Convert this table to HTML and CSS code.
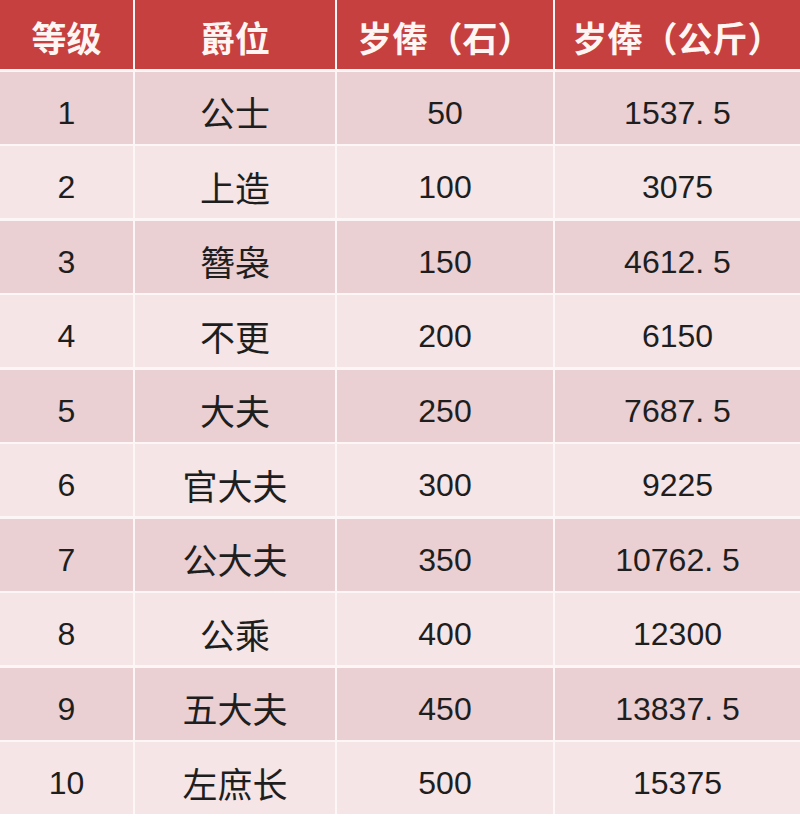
FILE: index.html
```html
<!DOCTYPE html>
<html lang="zh-CN">
<head>
<meta charset="utf-8">
<title>爵位岁俸</title>
<link rel="stylesheet" href="styles.css">
</head>
<body>
<div class="table">
  <div class="row head">
    <div class="cell">等级</div>
    <div class="cell">爵位</div>
    <div class="cell">岁俸（石）</div>
    <div class="cell">岁俸（公斤）</div>
  </div>
  <div class="row odd"><div class="cell">1</div><div class="cell name">公士</div><div class="cell">50</div><div class="cell">1537. 5</div></div>
  <div class="row even"><div class="cell">2</div><div class="cell name">上造</div><div class="cell">100</div><div class="cell">3075</div></div>
  <div class="row odd"><div class="cell">3</div><div class="cell name">簪袅</div><div class="cell">150</div><div class="cell">4612. 5</div></div>
  <div class="row even"><div class="cell">4</div><div class="cell name">不更</div><div class="cell">200</div><div class="cell">6150</div></div>
  <div class="row odd"><div class="cell">5</div><div class="cell name">大夫</div><div class="cell">250</div><div class="cell">7687. 5</div></div>
  <div class="row even"><div class="cell">6</div><div class="cell name">官大夫</div><div class="cell">300</div><div class="cell">9225</div></div>
  <div class="row odd"><div class="cell">7</div><div class="cell name">公大夫</div><div class="cell">350</div><div class="cell">10762. 5</div></div>
  <div class="row even"><div class="cell">8</div><div class="cell name">公乘</div><div class="cell">400</div><div class="cell">12300</div></div>
  <div class="row odd"><div class="cell">9</div><div class="cell name">五大夫</div><div class="cell">450</div><div class="cell">13837. 5</div></div>
  <div class="row even"><div class="cell">10</div><div class="cell name">左庶长</div><div class="cell">500</div><div class="cell">15375</div></div>
</div>
</body>
</html>
```

FILE: styles.css
```css
html, body {
  margin: 0;
  padding: 0;
  background: #ffffff;
}

.table {
  width: 800px;
  display: flex;
  flex-direction: column;
  gap: 2.5px;
  background: #fcf6f6;
  font-family: "Liberation Sans", "Noto Sans CJK SC", sans-serif;
}

.row {
  display: grid;
  grid-template-columns: 133px 200px 216px 1fr;
  column-gap: 2px;
  height: 72px;
}

.cell {
  display: flex;
  align-items: center;
  justify-content: center;
  padding-top: 11px;
  box-sizing: border-box;
  font-size: 32px;
  color: #1e1e1e;
  white-space: nowrap;
}

.name {
  font-family: "Noto Sans CJK SC", sans-serif;
  font-size: 35px;
  padding-top: 8px;
}

.head {
  height: 69px;
}

.head .cell {
  background: #c5403f;
  color: #fff6f4;
  font-family: "Noto Sans CJK SC", sans-serif;
  font-weight: bold;
  font-size: 35px;
  padding-top: 4px;
}

.odd .cell {
  background: #eacfd3;
}

.even .cell {
  background: #f5e5e6;
}
```
